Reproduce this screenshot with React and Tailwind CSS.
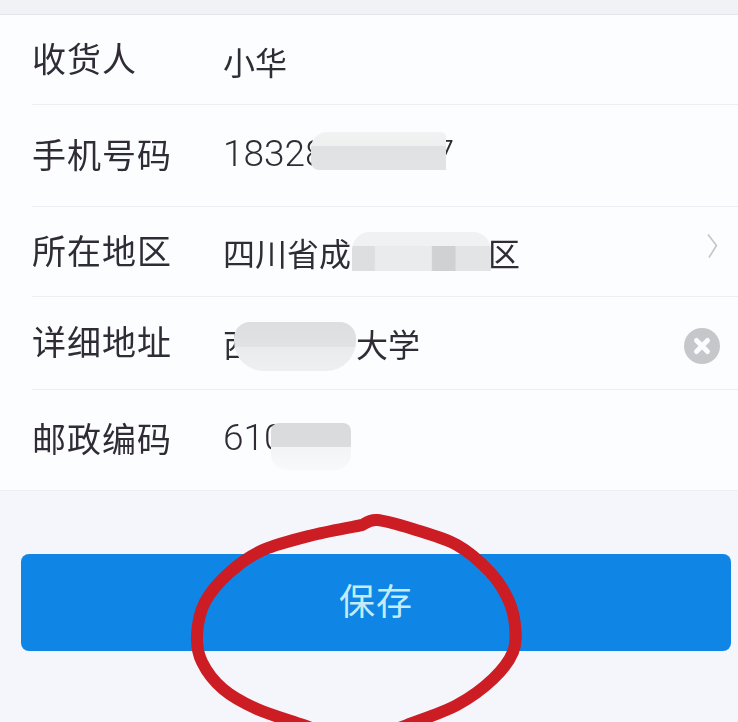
const labelFont = { fontFamily: '"Noto Sans CJK SC", sans-serif' };

// hand-traced marker line, smoothed into cubic curves
const leftArc = [[362, 525], [313, 535], [263, 550], [230, 572], [205, 602], [197, 635], [202, 662], [223, 689], [257, 709], [303, 725], [330, 735]];
const rightArc = [[362, 525], [377, 520], [413, 529], [457, 545], [490, 572], [508, 599], [515, 625], [513, 652], [493, 679], [457, 705], [407, 725], [380, 735]];

function smooth(pts) {
  let d = `M${pts[0][0]} ${pts[0][1]}`;
  for (let i = 0; i < pts.length - 1; i++) {
    const a = pts[i - 1] || pts[i];
    const b = pts[i];
    const c = pts[i + 1];
    const e = pts[i + 2] || c;
    d += ` C${b[0] + (c[0] - a[0]) / 6} ${b[1] + (c[1] - a[1]) / 6} ${c[0] - (e[0] - b[0]) / 6} ${c[1] - (e[1] - b[1]) / 6} ${c[0]} ${c[1]}`;
  }
  return d;
}

function Chevron() {
  return (
    <svg width="12" height="26" viewBox="0 0 12 26" fill="none" className="mr-[20px] -mt-[8px]">
      <path d="M2 1.5 L10.5 12.5 L3 24.5" stroke="#c3c5ca" strokeWidth="1.6" />
    </svg>
  );
}

function ClearIcon() {
  return (
    <svg width="36" height="36" viewBox="0 0 36 36" className="mr-[18px] mt-[10px]">
      <circle cx="18" cy="18" r="18" fill="#c5c7ca" />
      <path d="M12.5 12.5 L23.5 23.5 M23.5 12.5 L12.5 23.5" stroke="#fbfcfd" strokeWidth="5" strokeLinecap="round" />
    </svg>
  );
}

function Row({ label, height, last, trailing, children }) {
  return (
    <div className={`relative flex items-center pl-[32px] pb-[5px] ${last ? "" : "after:absolute after:bottom-0 after:left-[32px] after:right-0 after:h-px after:bg-[#eceef3]"}`} style={{ height }}>
      <div className="w-[191px] shrink-0 text-[34px] leading-none tracking-[1px] text-[#2f2c36] blur-[0.5px]">{label}</div>
      <div className="flex flex-1 items-center text-[32px] leading-none text-[#2f2c36] blur-[0.5px]">{children}</div>
      {trailing}
    </div>
  );
}

export default function App() {
  return (
    <div className="relative h-[722px] w-[738px] overflow-hidden bg-[#f4f6fb]" style={labelFont}>
      <div className="h-[15px] border-b border-[#e3e6ec] bg-[#f0f2f6]" />

      <div className="bg-[#fcfdff]">
        <Row label="收货人" height={90}>
          <span className="mt-[6px]">小华</span>
        </Row>
        <Row label="手机号码" height={102}>
          <span className="font-['Roboto'] text-[37px] font-light">18328</span>
          <div className="relative -ml-[15px] -mt-[6px] h-[38px] w-[135px] rounded-tl-[16px] rounded-tr-[5px] rounded-bl-[8px] bg-[linear-gradient(#f1f3f3_0%,#eef0f0_37%,#dfe1e2_38%,#e1e3e4_100%)]" />
          <span className="-ml-[12px] font-['Roboto'] text-[37px] font-light">7</span>
        </Row>
        <Row label="所在地区" height={90} trailing={<Chevron />}>
          <span className="mt-[4px]">四川省成</span>
          <div className="relative ml-[1px] mt-[4px] h-[39px] w-[139px] rounded-t-[18px] bg-[linear-gradient(#eff1f2_0%,#eff1f2_35%,transparent_36%),linear-gradient(90deg,#dcdedf_0%,#dcdedf_16%,#e9ebec_17%,#e9ebec_57%,#cfd1d2_58%,#cfd1d2_74%,#e2e4e5_75%,#e2e4e5_100%)]" />
          <span className="mt-[4px] -ml-[3px]">区</span>
        </Row>
        <Row label="详细地址" height={93} trailing={<ClearIcon />}>
          <span className="mt-[4px]">西</span>
          <div className="relative -ml-[21px] mt-[10px] h-[49px] w-[122px] rounded-t-[16px] rounded-b-[30px] bg-[linear-gradient(#dcdedf_0%,#e0e2e3_50%,#e9ebec_51%,#edeff0_100%)]" />
          <span className="mt-[4px]">大学</span>
        </Row>
        <Row label="邮政编码" height={100} last>
          <span className="font-['Roboto'] text-[37px] font-light">610</span>
          <div className="relative -ml-[14px] mt-[17px] h-[47px] w-[80px] rounded-t-[8px] rounded-b-[16px] bg-[linear-gradient(#d8dadb_0%,#dadcdd_50%,#f3f4f6_51%,#f8f9fb_100%)]" />
        </Row>
      </div>

      <div className="border-t border-[#eceef3] pl-[21px] pr-[7px] pt-[63px]">
        <button className="flex h-[97px] w-full items-center justify-center rounded-[8px] bg-[#0f86e5] pb-[8px] text-[36px] tracking-[1px] text-[#c3ecf8]">
          保存
        </button>
      </div>

      {/* red marker circle drawn over the button */}
      <svg className="absolute inset-0" width="738" height="722" viewBox="0 0 738 722" fill="none">
        <path d={`${smooth(leftArc)} ${smooth(rightArc)}`} stroke="#cb1d23" strokeWidth="12" strokeLinecap="round" strokeLinejoin="round" />
      </svg>
    </div>
  );
}
